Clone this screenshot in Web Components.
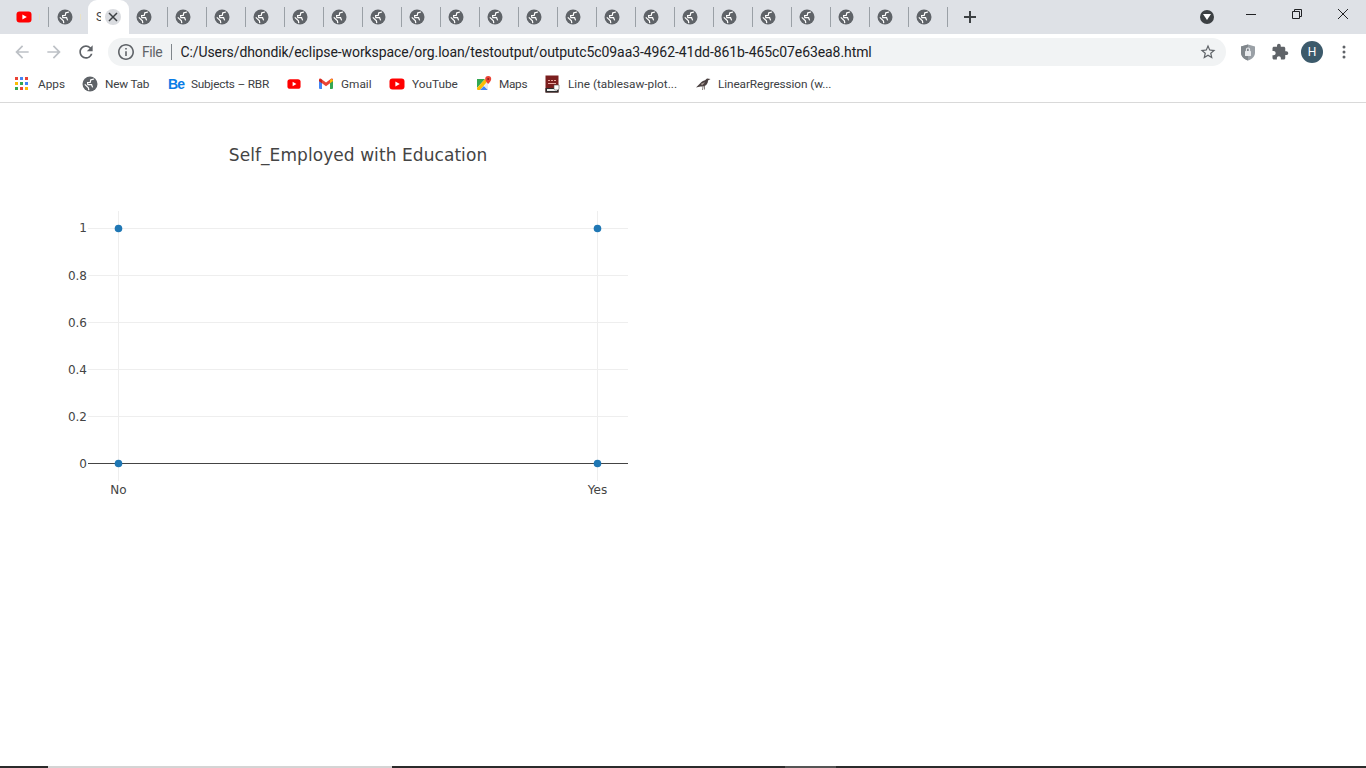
<!DOCTYPE html>
<html>
<head>
<meta charset="utf-8">
<title>Self_Employed with Education</title>
<style>
  html, body { margin: 0; height: 100%; background: #fff; overflow: hidden; }
</style>
</head>
<body>
<browser-window>
  <tab-strip></tab-strip>
  <nav-toolbar url="C:/Users/dhondik/eclipse-workspace/org.loan/testoutput/outputc5c09aa3-4962-41dd-861b-465c07e63ea8.html"></nav-toolbar>
  <bookmark-bar>
    <bookmark-item icon="apps" label="Apps" w="27"></bookmark-item>
    <bookmark-item icon="globe" label="New Tab" w="45" spacing="-.2"></bookmark-item>
    <bookmark-item icon="be" label="Subjects – RBR" w="78" spacing="-.2"></bookmark-item>
    <bookmark-item icon="youtube" bare></bookmark-item>
    <bookmark-item icon="gmail" label="Gmail" w="30"></bookmark-item>
    <bookmark-item icon="youtube" label="YouTube" w="46"></bookmark-item>
    <bookmark-item icon="maps" label="Maps" w="28" spacing="-.3"></bookmark-item>
    <bookmark-item icon="book" label="Line (tablesaw-plot..." w="109"></bookmark-item>
    <bookmark-item icon="bird" label="LinearRegression (w..." w="114" spacing="-.1"></bookmark-item>
  </bookmark-bar>
  <plot-chart slot="page"></plot-chart>
  <task-strip slot="bottom"></task-strip>
</browser-window>

<script>
const ICONS = {
  globe: '<svg width="16" height="16" viewBox="0 0 16 16"><circle cx="8" cy="8" r="7.500" fill="#5f6368"/><path fill="none" stroke="#fff" stroke-width="1.200" d="M12 3 8.800 3.800 8.200 6.500H5.600L5.800 8.700H9.600L10.600 11.400M2.800 8.400 6.400 11.800 6.800 14.200"/></svg>',
  youtube: '<svg width="16" height="16" viewBox="0 0 16 16"><rect x="0.5" y="2.500" width="15" height="11" rx="3" fill="#f00"/><path fill="#fff" d="M6.400 5.400 10.800 8 6.400 10.600z"/></svg>',
  apps: '<svg width="16" height="16" viewBox="0 0 16 16"><g><rect x="1" y="1" width="3" height="3" fill="#ea4335"/><rect x="6" y="1" width="3" height="3" fill="#4285f4"/><rect x="11" y="1" width="3" height="3" fill="#ea4335"/><rect x="1" y="6" width="3" height="3" fill="#fbbc04"/><rect x="6" y="6" width="3" height="3" fill="#34a853"/><rect x="11" y="6" width="3" height="3" fill="#4285f4"/><rect x="1" y="11" width="3" height="3" fill="#34a853"/><rect x="6" y="11" width="3" height="3" fill="#ea4335"/><rect x="11" y="11" width="3" height="3" fill="#fbbc04"/></g></svg>',
  gmail: '<svg width="16" height="16" viewBox="0 0 16 16"><path fill="#4285f4" d="M1 4h3v9H2a1 1 0 0 1-1-1z"/><path fill="#34a853" d="M12 4h3v8a1 1 0 0 1-1 1h-2z"/><path fill="#ea4335" d="M1 3.600C1 2.600 2.200 2.100 3 2.700L8 6.500l5-3.800c.8-.6 2-.1 2 .9V5L12 7.200 8 10.200 4 7.200 1 5z"/><path fill="#c5221f" d="M1 4v1l3 2.200V4.200L3 3z"/><path fill="#fbbc04" d="M15 4v1l-3 2.200V4.200L13 3z"/></svg>',
  maps: '<svg width="16" height="16" viewBox="0 0 16 16"><path fill="#34a853" d="M1 3h8L1 12z"/><path fill="#fbbc04" d="M1 12 9 3l2 3-7 8H2a1 1 0 0 1-1-1z"/><path fill="#4285f4" d="M4 14l4-4 4 4z"/><path fill="#e8eaed" d="M8 10l3-4 1 1v7z"/><path fill="#ea4335" d="M12.200 0a3 3 0 0 0-3 3c0 2 3 5 3 5s3-3 3-5a3 3 0 0 0-3-3z"/><circle cx="12.200" cy="3" r="1" fill="#8c1d18"/></svg>',
  book: '<svg width="16" height="18" viewBox="0 0 16 18"><rect x="0.500" y="0.500" width="13" height="17" fill="#7b1e1e"/><rect x="0.500" y="13" width="13" height="4.500" fill="#2b2b2b"/><rect x="2" y="14" width="10" height="2" fill="#eee"/><path fill="#e9a7a0" d="M3 5h2v1H3zM6 5h2v1H6zM9 5h2v1H9zM3 8h8v1H3z"/><path fill="#fff" stroke="#555" stroke-width=".6" d="M9 10h5v3.500a1.500 1.500 0 0 1-1.500 1.500h-2A1.500 1.500 0 0 1 9 13.500z"/></svg>',
  bird: '<svg width="16" height="16" viewBox="0 0 16 16"><path fill="#4a4040" d="M1 11.500 5 7.500c1-1.500 3-3 5-3.300L12 2.500 15.500 3 13 4.500c0 3-2 5.500-5 6L5.500 10.500z"/><path fill="#a89a94" d="M6 8c1-1 2.500-1.500 4-1.500L7 9.500z"/><path stroke="#6b5f5a" stroke-width=".8" d="M8 10.500 7.500 14M9.500 10 9.500 13.500"/></svg>',
  back: '<svg width="20" height="20" viewBox="0 0 24 24"><path fill="#bdc1c6" d="M20 11H7.830l5.590-5.590L12 4l-8 8 8 8 1.410-1.410L7.830 13H20v-2z"/></svg>',
  forward: '<svg width="20" height="20" viewBox="0 0 24 24"><path fill="#bdc1c6" d="M12 4l-1.410 1.410L16.170 11H4v2h12.170l-5.580 5.590L12 20l8-8z"/></svg>',
  reload: '<svg width="20" height="20" viewBox="0 0 24 24"><path fill="#5f6368" d="M17.650 6.350A7.958 7.958 0 0 0 12 4c-4.420 0-7.990 3.580-7.990 8s3.570 8 7.990 8c3.730 0 6.840-2.550 7.730-6h-2.080A5.990 5.990 0 0 1 12 18c-3.310 0-6-2.690-6-6s2.690-6 6-6c1.660 0 3.140.69 4.220 1.780L13 11h7V4l-2.350 2.350z"/></svg>',
  info: '<svg width="16" height="16" viewBox="2 2 20 20"><path fill="#5f6368" d="M11 7h2v2h-2zm0 4h2v6h-2zm1-9C6.480 2 2 6.480 2 12s4.480 10 10 10 10-4.480 10-10S17.520 2 12 2zm0 18c-4.410 0-8-3.590-8-8s3.590-8 8-8 8 3.590 8 8-3.590 8-8 8z"/></svg>',
  star: '<svg width="18" height="18" viewBox="0 0 24 24"><path fill="#5f6368" d="M22 9.240l-7.190-.620L12 2 9.190 8.630 2 9.240l5.460 4.730L5.820 21 12 17.270 18.180 21l-1.630-7.030L22 9.240zM12 15.400l-3.760 2.270 1-4.280-3.320-2.880 4.380-.380L12 6.100l1.710 4.040 4.380.380-3.320 2.880 1 4.280L12 15.400z"/></svg>',
  shield: '<svg width="16" height="17" viewBox="0 0 16 17"><path fill="#9aa0a6" d="M8 .5 15 2.500v6c0 3.800-3 6.800-7 8-4-1.200-7-4.200-7-8v-6z"/><path fill="#80868b" d="M8 .5 1 2.500v6c0 3.800 3 6.800 7 8z"/><rect x="5" y="7" width="6" height="5" rx=".6" fill="#e8eaed"/><path fill="none" stroke="#e8eaed" stroke-width="1.100" d="M6.400 7V5.600a1.600 1.600 0 0 1 3.200 0V7"/></svg>',
  puzzle: '<svg width="18" height="18" viewBox="0 0 24 24"><path fill="#5f6368" d="M20.500 11H19V7c0-1.100-.9-2-2-2h-4V3.500C13 2.120 11.880 1 10.500 1S8 2.120 8 3.500V5H4c-1.100 0-1.990.9-1.990 2v3.800H3.500c1.490 0 2.700 1.210 2.700 2.700s-1.210 2.700-2.700 2.700H2V20c0 1.100.9 2 2 2h3.800v-1.500c0-1.490 1.210-2.700 2.700-2.700 1.490 0 2.700 1.210 2.700 2.700V22H17c1.100 0 2-.9 2-2v-4h1.500c1.380 0 2.500-1.120 2.500-2.500S21.880 11 20.500 11z"/></svg>',
  dots: '<svg width="16" height="16" viewBox="0 0 16 16"><g fill="#5f6368"><circle cx="8" cy="3" r="1.500"/><circle cx="8" cy="8" r="1.500"/><circle cx="8" cy="13" r="1.500"/></g></svg>',
  close: '<svg width="10" height="10" viewBox="0 0 10 10"><path stroke="#3c4043" stroke-width="1.500" d="M1 1l8 8M9 1l-8 8"/></svg>'
};

class BrowserWindow extends HTMLElement {
  constructor() {
    super();
    this.attachShadow({ mode: 'open' });
    this.shadowRoot.innerHTML = `
      <style>
        :host { display: flex; flex-direction: column; height: 100vh; font-family: Roboto, "Liberation Sans", sans-serif; }
        .page { flex: 1; min-height: 0; }
      </style>
      <slot></slot>
      <div class="page"><slot name="page"></slot></div>
      <slot name="bottom"></slot>
    `;
  }
}

class TabStrip extends HTMLElement {
  constructor() {
    super();
    this.attachShadow({ mode: 'open' });
  }

  connectedCallback() {
    let rest = '';
    for (let i = 0; i < 21; i++) {
      rest += `<div class="tab sep">${ICONS.globe}</div>`;
    }
    this.shadowRoot.innerHTML = `
      <style>
        :host { display: flex; height: 34px; background: #dee1e6; padding-left: 8px; align-items: stretch; flex: none; }
        .tab { width: 39px; box-sizing: border-box; padding-left: 7px; display: flex; align-items: center; position: relative; flex: none; }
        .one { width: 41px; padding-left: 8px; }
        .two { width: 39px; padding-left: 8px; }
        .sliver { width: 1px; height: 6px; margin-left: 7px; background: #e9e2c6; }
        .sep::after { content: ''; position: absolute; right: 0; top: 7px; height: 20px; width: 1px; background: #9aa0a6; }
        .active { width: 41px; padding-left: 8px; background: #fff; border-radius: 9px 9px 0 0; color: #3c4043; font-size: 12px; }
        .clip { width: 5px; overflow: hidden; }
        .x { width: 16px; height: 16px; margin-left: 4px; border-radius: 50%; background: #dadce0; display: flex; align-items: center; justify-content: center; }
        .newtab { margin-left: 11px; width: 22px; display: flex; align-items: center; justify-content: center; }
        .spacer { flex: 1; }
        .menu { width: 14px; height: 14px; border-radius: 50%; background: #3c4043; display: flex; align-items: center; justify-content: center; margin: 0 14px 0 0; align-self: center; }
        .win { width: 46px; display: flex; justify-content: center; padding-top: 9px; box-sizing: border-box; }
      </style>
      <div class="tab one sep">${ICONS.youtube}<span class="sliver"></span></div>
      <div class="tab two">${ICONS.globe}<span class="sliver"></span></div>
      <div class="tab active"><span class="clip">S</span><span class="x">${ICONS.close}</span></div>
      ${rest}
      <div class="newtab"><svg width="12" height="12" viewBox="0 0 12 12"><path stroke="#3c4043" stroke-width="2" d="M6 0v12M0 6h12"/></svg></div>
      <div class="spacer"></div>
      <div class="menu"><svg width="8" height="6" viewBox="0 0 8 6"><path fill="#fff" d="M0 0h8L4 6z"/></svg></div>
      <div class="win"><svg width="10" height="10" viewBox="0 0 10 10"><path stroke="#202124" d="M0 5.500h10"/></svg></div>
      <div class="win"><svg width="10" height="10" viewBox="0 0 10 10" fill="none"><path stroke="#202124" d="M.5 2.500h7v7h-7zM2.500 2.500v-2h7v7h-2"/></svg></div>
      <div class="win"><svg width="10" height="10" viewBox="0 0 10 10"><path stroke="#202124" d="M0 0l10 10M10 0L0 10"/></svg></div>
    `;
  }
}

class NavToolbar extends HTMLElement {
  constructor() {
    super();
    this.attachShadow({ mode: 'open' });
  }

  connectedCallback() {
    const url = this.getAttribute('url') || '';
    this.shadowRoot.innerHTML = `
      <style>
        :host { display: flex; align-items: center; gap: 4px; height: 35px; padding: 1px 8px 0; box-sizing: border-box; background: #fff; flex: none; }
        .btn { width: 28px; height: 28px; display: flex; align-items: center; justify-content: center; flex: none; }
        .omni { flex: 1; height: 28px; margin: 0 4px; border-radius: 14px; background: #f1f3f4; display: flex; align-items: center; padding: 0 9px 0 10px; min-width: 0; }
        .file { font-size: 14px; letter-spacing: -.4px; color: #5f6368; margin-left: 8px; }
        .bar { width: 1px; height: 16px; background: #80868b; margin: 0 8px 0 9px; }
        .url { flex: 1; font-size: 14px; letter-spacing: -.08px; color: #202124; white-space: nowrap; }
        .avatar { width: 22px; height: 22px; border-radius: 50%; background: #3c5a6b; color: #fff; font-size: 12px; display: flex; align-items: center; justify-content: center; }
      </style>
      <div class="btn">${ICONS.back}</div>
      <div class="btn">${ICONS.forward}</div>
      <div class="btn">${ICONS.reload}</div>
      <div class="omni">
        ${ICONS.info}
        <span class="file">File</span>
        <span class="bar"></span>
        <span class="url">${url}</span>
        ${ICONS.star}
      </div>
      <div class="btn">${ICONS.shield}</div>
      <div class="btn">${ICONS.puzzle}</div>
      <div class="btn"><span class="avatar">H</span></div>
      <div class="btn">${ICONS.dots}</div>
    `;
  }
}

class BookmarkBar extends HTMLElement {
  constructor() {
    super();
    this.attachShadow({ mode: 'open' });
    this.shadowRoot.innerHTML = `
      <style>
        :host { display: flex; align-items: center; gap: 17px; height: 34px; padding: 0 0 3px 14px; box-sizing: border-box; background: #fff; border-bottom: 1px solid #d9d9d9; flex: none; }
      </style>
      <slot></slot>
    `;
  }
}

class BookmarkItem extends HTMLElement {
  constructor() {
    super();
    this.attachShadow({ mode: 'open' });
  }

  connectedCallback() {
    const label = this.getAttribute('label');
    const name = this.getAttribute('icon');
    const w = parseInt(this.getAttribute('w'), 10) || 0;
    const spacing = this.getAttribute('spacing') || '0';
    const icon = name === 'be' ? '<b class="be">Be</b>' : ICONS[name];
    this.shadowRoot.innerHTML = `
      <style>
        :host { display: flex; align-items: center; gap: 8px; font-size: 11.8px; color: #3c4043; white-space: nowrap; }
        :host([bare]) .ico { width: 14px; }
        .ico { width: 16px; display: flex; align-items: center; justify-content: center; }
        .be { font: bold 14px "Liberation Sans", sans-serif; color: #0a7ce6; letter-spacing: -1px; }
        .label { display: block; margin-left: -1px; width: ${w + 1}px; letter-spacing: ${spacing}px; }
        :host([icon="apps"]) .label { margin-left: 0; width: ${w}px; }
      </style>
      <span class="ico">${icon}</span>
      ${label ? `<span class="label">${label}</span>` : ''}
    `;
  }
}

class PlotChart extends HTMLElement {
  constructor() {
    super();
    this.attachShadow({ mode: 'open' });
  }

  connectedCallback() {
    // same numbers as the plot: x at 110 / 589, y from 117 (1) down to 352 (0)
    const ys = [[117, '1', 4], [164, '0.8', 5], [211, '0.6', 5], [258, '0.4', 5], [305, '0.2', 5]];
    const grid = ys.map(([y]) => `<path d="M80 ${y}.5H620" stroke="#eee"/>`).join('');
    const labels = ys.concat([[352, '0', 5]]).map(([y, t, d]) =>
      `<text x="79" y="${y + d}" text-anchor="end">${t}</text>`).join('');
    const points = [[110, 117], [589, 117], [110, 352], [589, 352]].map(([x, y]) =>
      `<circle cx="${x + .5}" cy="${y + .5}" r="3.8" fill="#1f77b4"/>`).join('');
    this.shadowRoot.innerHTML = `
      <style>
        :host { display: block; padding: 8px; }
        svg { display: block; font-family: "DejaVu Sans", Verdana, sans-serif; font-size: 12px; fill: #444; }
        .title { font-size: 17px; letter-spacing: .07px; }
      </style>
      <svg width="700" height="450" viewBox="0 0 700 450">
        <text class="title" x="350" y="50" text-anchor="middle">Self_Employed with Education</text>
        <path d="M110.5 100V370M589.5 100V370" stroke="#eee"/>
        ${grid}
        <path d="M80 352.5H620" stroke="#444"/>
        ${labels}
        ${points}
        <text x="110.5" y="383" text-anchor="middle">No</text>
        <text x="589.5" y="383" text-anchor="middle">Yes</text>
      </svg>
    `;
  }
}

class TaskStrip extends HTMLElement {
  constructor() {
    super();
    this.attachShadow({ mode: 'open' });
    this.shadowRoot.innerHTML = `
      <style>
        :host { display: flex; height: 2px; background: #2b2b2b; flex: none; }
        .a { width: 48px; }
        .light { width: 344px; background: #d4d4d4; }
        .b { width: 393px; }
        .mid { width: 51px; background: #555; }
      </style>
      <div class="a"></div><div class="light"></div><div class="b"></div><div class="mid"></div>
    `;
  }
}

customElements.define('browser-window', BrowserWindow);
customElements.define('tab-strip', TabStrip);
customElements.define('nav-toolbar', NavToolbar);
customElements.define('bookmark-bar', BookmarkBar);
customElements.define('bookmark-item', BookmarkItem);
customElements.define('plot-chart', PlotChart);
customElements.define('task-strip', TaskStrip);
</script>
</body>
</html>
